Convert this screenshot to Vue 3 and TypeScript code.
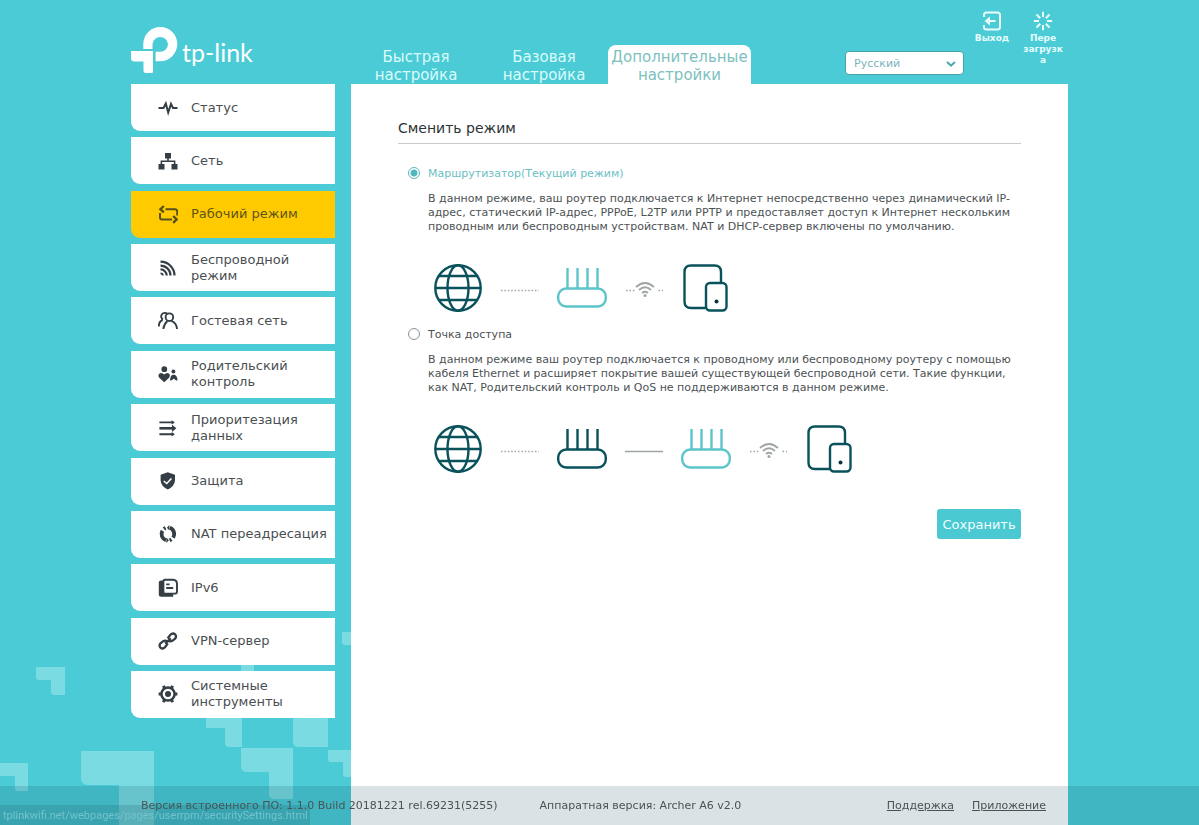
<script setup lang="ts">
import { ref } from 'vue'

interface Shape {
  d: string
  stroke?: number
}
interface MenuItem {
  label: string
  shapes: Shape[]
}
type Part = 'globe' | 'dots' | 'line' | 'wifi' | 'router' | 'routerActive' | 'devices'
interface Mode {
  id: string
  label: string
  text: string
  parts: Part[]
}

const menu: MenuItem[] = [
  { label: 'Статус', shapes: [{ d: 'M.5 10H5.5L7.8 5.6L10.2 14.6L13 6L15 10H19.5', stroke: 2 }] },
  {
    label: 'Сеть',
    shapes: [
      { d: 'M7 2h6v5.5H7zM.5 13h6v5.5h-6zM13.5 13h6v5.5h-6z' },
      { d: 'M10 7V10.2M3.4 14V10.2H16.6V14', stroke: 1.6 },
    ],
  },
  {
    label: 'Рабочий режим',
    shapes: [
      { d: 'M7.5 5.2H17Q19.2 5.2 19.2 7.4V11.5M14 15.4H4Q2 15.4 2 13.4V9', stroke: 2 },
      { d: 'M5.8 2L2.4 5.2L5.8 8.4M15.2 12L18.6 15.4L15.2 18.8', stroke: 2.4 },
    ],
  },
  {
    label: 'Беспроводной режим',
    shapes: [
      { d: 'M2.5 3.6A14 14 0 0 1 16.5 17.6M2.5 7.6A10 10 0 0 1 12.5 17.6M2.5 11.4A6.2 6.2 0 0 1 8.7 17.6', stroke: 2.2 },
      { d: 'M2.5 14.4A3.2 3.2 0 0 1 5.7 17.6L4.3 17.6L2.5 15.9z' },
    ],
  },
  {
    label: 'Гостевая сеть',
    shapes: [
      { d: 'M9.4 3A3.6 3.6 0 1 0 5 8.6M15.2 6.2A3.8 3.8 0 1 1 7.6 6.2A3.8 3.8 0 1 1 15.2 6.2M.8 15.4Q.8 10.6 4.6 9M5.4 18Q5.8 13.4 9.2 10.2M13.6 10.2Q18.6 12 19 18', stroke: 1.9 },
    ],
  },
  {
    label: 'Родительский контроль',
    shapes: [
      { d: 'M9.2 5.2A2.9 2.9 0 1 1 3.4 5.2A2.9 2.9 0 1 1 9.2 5.2M6.2 18.2L1.3 13.8Q-.2 11.8 1 10Q3.2 7.6 6.2 10.4Q9.2 7.6 11.4 10Q12.5 11.8 11.1 13.8ZM17.4 7.4A2 2 0 1 1 13.4 7.4A2 2 0 1 1 17.4 7.4M12 16.2Q12.4 10.8 15.6 10.8Q19 10.8 19.6 16.2Q17.4 17 15.8 14.6Q14.2 17 12 16.2' },
    ],
  },
  {
    label: 'Приоритезация данных',
    shapes: [
      { d: 'M1.4 4.4H15.5M1.4 16.2H15.5', stroke: 1.9 },
      { d: 'M1.4 10.3H15', stroke: 2.6 },
      { d: 'M13.6 2.2L16.8 4.4L13.6 6.6zM14 6.7L18.4 10.3L14 13.9zM13.6 14L16.8 16.2L13.6 18.4z' },
    ],
  },
  {
    label: 'Защита',
    shapes: [
      { d: 'M9.8 1.2L17 3.8V9.6Q16.6 15.4 9.8 18.6Q3 15.4 2.6 9.6V3.8ZM6.2 9.4L5.2 10.5L8.8 13.6L14 8L12.8 7L8.7 11.4Z' },
    ],
  },
  {
    label: 'NAT переадресация',
    shapes: [
      { d: 'M11.8 3.8A6.5 6.5 0 0 1 15 13.6M13.4 15.2A6.5 6.5 0 0 1 11.6 16.2M8 16.2A6.5 6.5 0 0 1 4.4 6.8M6 5A6.5 6.5 0 0 1 7.6 4', stroke: 3.8 },
      { d: 'M11.4 1V6.600L8.900 3.800zM8.400 13.400V19L10.900 16.200z' },
    ],
  },
  {
    label: 'IPv6',
    shapes: [
      { d: 'M.8 4.6Q.8 2.6 3 2.6H5V15.6H15.2V18.8H3Q.8 18.8 .8 16.8Z' },
      { d: 'M7 1.8H15.2Q19 2 19 6V13.4Q19 15.6 16.8 15.6H7Q5.4 15.6 5.4 14V3.4Q5.4 1.8 7 1.8ZM8.2 6.4H11.6M8.200 10H15.2', stroke: 1.9 },
    ],
  },
  {
    label: 'VPN-сервер',
    shapes: [
      { d: 'M9.6 7.4L12.4 3.8Q14.8 1.4 17.2 3.4Q19 5.8 16.8 8L14.4 9.8Q12 11 10 9.4M9.8 12.4L7.2 16Q4.8 18.6 2.4 16.6Q.6 14.2 2.8 12L5.2 10.2Q7.6 9 9.4 10.6M7.2 12.6L12.8 7.4', stroke: 2.3 },
    ],
  },
  {
    label: 'Системные инструменты',
    shapes: [
      { d: 'M16.6 10A6.600 6.600 0 1 1 3.400 10A6.600 6.600 0 1 1 16.600 10', stroke: 2.5 },
      { d: 'M13 10A3 3 0 1 1 7 10A3 3 0 1 1 13 10M4.200 2.200L6.800 1.200L7.800 3.800L5 5zM15.800 2.200L13.200 1.200L12.200 3.800L15 5zM4.200 17.800L6.800 18.800L7.800 16.200L5 15zM15.800 17.800L13.200 18.800L12.200 16.200L15 15zM.6 8.600H3.400V11.400H.6zM16.600 8.600H19.400V11.400H16.600z' },
    ],
  },
]
const activeItem = 2

const modes: Mode[] = [
  {
    id: 'router',
    label: 'Маршрутизатор(Текущий режим)',
    text: 'В данном режиме, ваш роутер подключается к Интернет непосредственно через динамический IP-адрес, статический IP-адрес, PPPoE, L2TP или PPTP и предоставляет доступ к Интернет нескольким проводным или беспроводным устройствам. NAT и DHCP-сервер включены по умолчанию.',
    parts: ['globe', 'dots', 'routerActive', 'wifi', 'devices'],
  },
  {
    id: 'ap',
    label: 'Точка доступа',
    text: 'В данном режиме ваш роутер подключается к проводному или беспроводному роутеру с помощью кабеля Ethernet и расширяет покрытие вашей существующей беспроводной сети. Такие функции, как NAT, Родительский контроль и QoS не поддерживаются в данном режиме.',
    parts: ['globe', 'dots', 'router', 'line', 'routerActive', 'wifi', 'devices'],
  },
]
const mode = ref('router')
const language = ref('Русский')
const tabs = ['Быстрая настройка', 'Базовая настройка', 'Дополнительные настройки']
</script>

<template>
  <div class="page">
    <svg class="pixels" width="351" height="200" viewBox="0 0 351 200" aria-hidden="true">
      <path d="M36 42H65V70H54Q51 70 51 67V55H39Q36 55 36 52ZM0 138H28V166H18Q15 166 15 163V151H0ZM81 126H154V200H119V160H88Q81 160 81 153ZM206 70H242V122H229Q225 122 225 118V103H206ZM293 70H328V122H299Q293 122 293 116ZM241 123H293V174H274Q269 174 269 169V147H247Q241 147 241 141ZM328 125H351V152H346Q343 152 343 149V137H331Q328 137 328 134ZM342 7H351V20H345Q342 20 342 17ZM241 30H254V50H241Z" />
    </svg>

    <div class="frame">
      <header class="top">
        <a class="logo" href="#" aria-label="tp-link">
          <svg width="48" height="46" viewBox="0 0 48 46" aria-hidden="true">
            <path d="M12.3 22V17A17 17 0 0 1 46.3 17A17 17.3 0 0 1 29.3 34.3H24.6V24.8H29.3A7.8 7.8 0 0 0 37 17A7.8 7.8 0 0 0 21.5 17V22Z" />
            <path d="M0 24H22V44.5Q22 46 20.5 46H15Q12.5 46 12.5 43.5V34.6H3.5Q0 34.6 0 31Z" />
          </svg>
          <span class="brand">tp-link</span>
        </a>
        <nav class="tabs">
          <a v-for="(tab, i) in tabs" :key="tab" href="#" class="tab" :class="{ current: i === 2 }">{{ tab }}</a>
        </nav>
        <div class="language">
          <select v-model="language" aria-label="Язык">
            <option>Русский</option>
            <option>English</option>
          </select>
          <svg width="10" height="6" viewBox="0 0 10 6" aria-hidden="true"><path d="M1 1L5 4.6L9 1" /></svg>
        </div>
        <div class="tools">
          <button type="button" class="tool">
            <svg width="20" height="20" viewBox="0 0 20 20" aria-hidden="true">
              <path d="M2 6V4Q2 1.5 4.500 1.500H15.500Q18 1.500 18 4V16Q18 18.500 15.500 18.500H4.500Q2 18.500 2 16V14M7 10H13.500" />
              <path class="head" d="M2.500 10L8 5.500V14.500Z" />
            </svg>
            Выход
          </button>
          <button type="button" class="tool">
            <svg width="20" height="20" viewBox="0 0 20 20" aria-hidden="true">
              <path d="M10 .8V6M10 14V19.200M.8 10H6M14 10H19.200M3.500 3.500L7.200 7.200M12.800 12.800L16.500 16.500M16.500 3.500L12.800 7.200M7.200 12.800L3.500 16.500" />
            </svg>
            Пере загрузка
          </button>
        </div>
      </header>

      <div class="body">
        <nav class="menu">
          <a v-for="(item, i) in menu" :key="item.label" href="#" class="item" :class="{ active: i === activeItem }">
            <svg width="20" height="20" viewBox="0 0 20 20" aria-hidden="true">
              <path
                v-for="shape in item.shapes"
                :key="shape.d"
                :d="shape.d"
                :class="shape.stroke ? 'outline' : 'solid'"
                :stroke-width="shape.stroke"
              />
            </svg>
            <span>{{ item.label }}</span>
          </a>
        </nav>

        <main class="panel">
          <h1>Сменить режим</h1>
          <form @submit.prevent>
            <section v-for="m in modes" :key="m.id" class="mode">
              <label :class="{ chosen: mode === m.id }">
                <input v-model="mode" type="radio" name="mode" :value="m.id" />
                {{ m.label }}
              </label>
              <p>{{ m.text }}</p>
              <div class="diagram">
                <template v-for="(part, i) in m.parts" :key="i">
                  <svg v-if="part === 'globe'" class="dark" width="50" height="50" viewBox="0 0 50 50">
                    <circle cx="25" cy="25" r="22.700" />
                    <ellipse cx="25" cy="25" rx="10.500" ry="22.700" />
                    <path d="M2.300 25H47.700M6 13H44M6 37H44" />
                  </svg>
                  <svg v-else-if="part === 'dots'" class="link" width="38" height="50" viewBox="0 0 38 50">
                    <path d="M0 27.500H38" stroke-dasharray="1.500 1.900" />
                  </svg>
                  <svg v-else-if="part === 'line'" class="link" width="38" height="50" viewBox="0 0 38 50">
                    <path d="M0 27.500H38" />
                  </svg>
                  <svg v-else-if="part === 'wifi'" class="link" width="38" height="50" viewBox="0 0 38 50">
                    <path d="M1 27.500H9.500M33.500 27.500H38" stroke-dasharray="1.500 1.900" />
                    <path class="wave" d="M11 24Q20 16 29 24M14 27Q20 21.500 26 27M17 30Q20 27.500 23 30" />
                    <circle class="tip" cx="20" cy="32.500" r="1.500" />
                  </svg>
                  <svg
                    v-else-if="part === 'router' || part === 'routerActive'"
                    :class="part === 'router' ? 'dark' : 'teal'"
                    width="50" height="50" viewBox="0 0 50 50"
                  >
                    <rect x="1.200" y="25.500" width="47.600" height="18" rx="8" />
                    <path d="M10.500 5V25M20.500 5V25M30.500 5V25M40.500 5V25" />
                  </svg>
                  <svg v-else class="dark" width="50" height="50" viewBox="0 0 50 50">
                    <path d="M40 19V9Q40 2.500 33.500 2.500H10Q3.500 2.500 3.500 9V38.500Q3.500 45 10 45H25" />
                    <rect x="25" y="20" width="20.500" height="27.500" rx="4" />
                    <circle class="dot" cx="35.500" cy="38.500" r="2" />
                  </svg>
                </template>
              </div>
            </section>
            <div class="actions"><button type="submit" class="save">Сохранить</button></div>
          </form>
        </main>
      </div>
    </div>

    <footer class="bottom">
      <div class="info">
        <span>Версия встроенного ПО: 1.1.0 Build 20181221 rel.69231(5255)</span>
        <span>Аппаратная версия: Archer A6 v2.0</span>
        <nav class="help"><a href="#">Поддержка</a><a href="#">Приложение</a></nav>
      </div>
    </footer>
    <div class="status">tplinkwifi.net/webpages/pages/userrpm/securitySettings.html</div>
  </div>
</template>

<style>
body {
  margin: 0;
  background: #4acbd6;
}
</style>

<style scoped>
.page {
  position: relative;
  display: flex;
  min-height: 100vh;
  background: #4acbd6;
  font-family: Verdana, "DejaVu Sans", sans-serif;
  font-size: 11px;
  color: #4c5254;
}
.pixels {
  position: absolute;
  left: 0;
  bottom: 0;
  fill: #7bdbe2;
}
.frame {
  position: relative;
  display: flex;
  flex-direction: column;
  width: 100%;
  max-width: 937px;
  margin: 0 auto;
}
.top {
  display: flex;
  height: 84px;
}
.logo {
  display: flex;
  align-items: flex-start;
  flex: 0 0 221px;
  box-sizing: border-box;
  padding-top: 27px;
  color: #fff;
  text-decoration: none;
}
.logo svg {
  fill: #fff;
}
.brand {
  margin-left: 3px;
  padding-top: 7px;
  font-family: Lato, sans-serif;
  font-size: 25px;
  line-height: 36px;
}
.tabs {
  display: flex;
  align-items: flex-end;
}
.tab {
  width: 128px;
  height: 39px;
  box-sizing: border-box;
  padding: 3px 20px 0;
  border-radius: 8px 8px 0 0;
  color: #d9fbfb;
  font-size: 15px;
  line-height: 18px;
  text-align: center;
  text-decoration: none;
}
.tab.current {
  width: 143px;
  padding: 3px 0 0;
  background: #fff;
  color: #7dbfc0;
}
.language {
  position: relative;
  align-self: flex-end;
  width: 119px;
  margin: 0 0 9px auto;
}
.language select {
  display: block;
  width: 100%;
  height: 24px;
  padding: 0 8px;
  border: 1px solid #47a3a9;
  border-radius: 4px;
  appearance: none;
  background: #fff;
  color: #7cb4bb;
  font-family: inherit;
  font-size: 11px;
}
.language svg {
  position: absolute;
  top: 10px;
  right: 8px;
  fill: none;
  stroke: #4fa9b1;
  stroke-width: 2;
  pointer-events: none;
}
.tools {
  display: flex;
  gap: 11px;
  padding: 11px 5px 0 8px;
}
.tool {
  display: flex;
  flex-direction: column;
  align-items: center;
  width: 40px;
  padding: 0;
  border: 0;
  background: none;
  color: #e6fdfd;
  font-family: inherit;
  font-size: 9px;
  font-weight: 700;
  line-height: 11px;
  text-align: center;
  overflow-wrap: anywhere;
}
.tool svg {
  flex: none;
  margin-bottom: 2px;
  fill: none;
  stroke: #eafdfd;
  stroke-width: 2;
}
.tool .head {
  fill: #eafdfd;
  stroke: none;
}
.body {
  display: flex;
  flex: 1;
  gap: 16px;
}
.menu {
  display: flex;
  flex: 0 0 204px;
  flex-direction: column;
  justify-content: space-between;
  height: 634px;
}
.item {
  display: flex;
  align-items: center;
  gap: 13px;
  height: 47px;
  box-sizing: border-box;
  padding: 0 8px 0 27px;
  border-radius: 0 0 0 9px;
  background: #fff;
  color: #4a4f52;
  font-size: 13px;
  line-height: 16px;
  text-decoration: none;
}
.item.active {
  background: #ffcb00;
  color: #5e5418;
}
.item svg {
  flex: none;
}
.solid {
  fill: #343e44;
  fill-rule: evenodd;
}
.outline {
  fill: none;
  stroke: #343e44;
}
.active .outline {
  stroke: #55501c;
}
.panel {
  flex: 1;
  min-width: 0;
  box-sizing: border-box;
  padding: 32px 47px 60px;
  background: #fff;
}
h1 {
  margin: 0 0 19px;
  padding-bottom: 3px;
  border-bottom: 1px solid #c6cccc;
  color: #2e3334;
  font-size: 14px;
  font-weight: 400;
  line-height: 24px;
}
.mode {
  margin-bottom: 11px;
  padding-left: 30px;
}
.mode label {
  display: flex;
  align-items: center;
  gap: 8px;
  height: 20px;
  margin-left: -20px;
}
.mode label.chosen {
  color: #6cc0c4;
}
.mode input {
  width: 12px;
  height: 12px;
  margin: 0;
  border: 1px solid #8a9596;
  border-radius: 50%;
  appearance: none;
  background: #fff;
}
.mode input:checked {
  border-color: #5fb5ba;
  background: radial-gradient(circle, #4fb8bf 3px, #fff 4px);
}
.mode p {
  margin: 9px 0 29px;
  line-height: 14px;
}
.diagram {
  display: flex;
  gap: 18px;
  padding-left: 5px;
}
.diagram svg {
  flex: none;
  fill: none;
  stroke-width: 2.4;
}
.dark {
  stroke: #09525b;
}
.teal {
  stroke: #5cc5ca;
}
.dot {
  fill: #09343a;
  stroke: none;
}
.diagram .link {
  stroke: #9fa5a5;
  stroke-width: 1.5;
}
.link .wave {
  stroke-width: 1.8;
}
.link .tip {
  fill: #9fa5a5;
  stroke: none;
}
.actions {
  display: flex;
  justify-content: flex-end;
  padding-top: 24px;
}
.save {
  width: 84px;
  height: 30px;
  padding: 0;
  border: 0;
  border-radius: 3px;
  background: #4ac9d3;
  color: #effefe;
  font-family: inherit;
  font-size: 13px;
}
.bottom {
  position: fixed;
  right: 0;
  bottom: 0;
  left: 0;
  background: rgba(0, 70, 80, 0.15);
}
.info {
  display: flex;
  align-items: center;
  gap: 42px;
  max-width: 937px;
  height: 39px;
  box-sizing: border-box;
  margin: 0 auto;
  padding: 0 22px 0 10px;
  white-space: nowrap;
}
.help {
  display: flex;
  gap: 18px;
  margin-left: auto;
}
.help a {
  color: #4c5254;
}
.status {
  position: fixed;
  bottom: 0;
  left: 0;
  width: 310px;
  height: 20px;
  box-sizing: border-box;
  padding-left: 3px;
  background: rgba(40, 110, 120, 0.25);
  color: #72c3cd;
  font-family: Roboto, sans-serif;
  font-size: 11px;
  line-height: 22px;
  white-space: nowrap;
}
</style>
